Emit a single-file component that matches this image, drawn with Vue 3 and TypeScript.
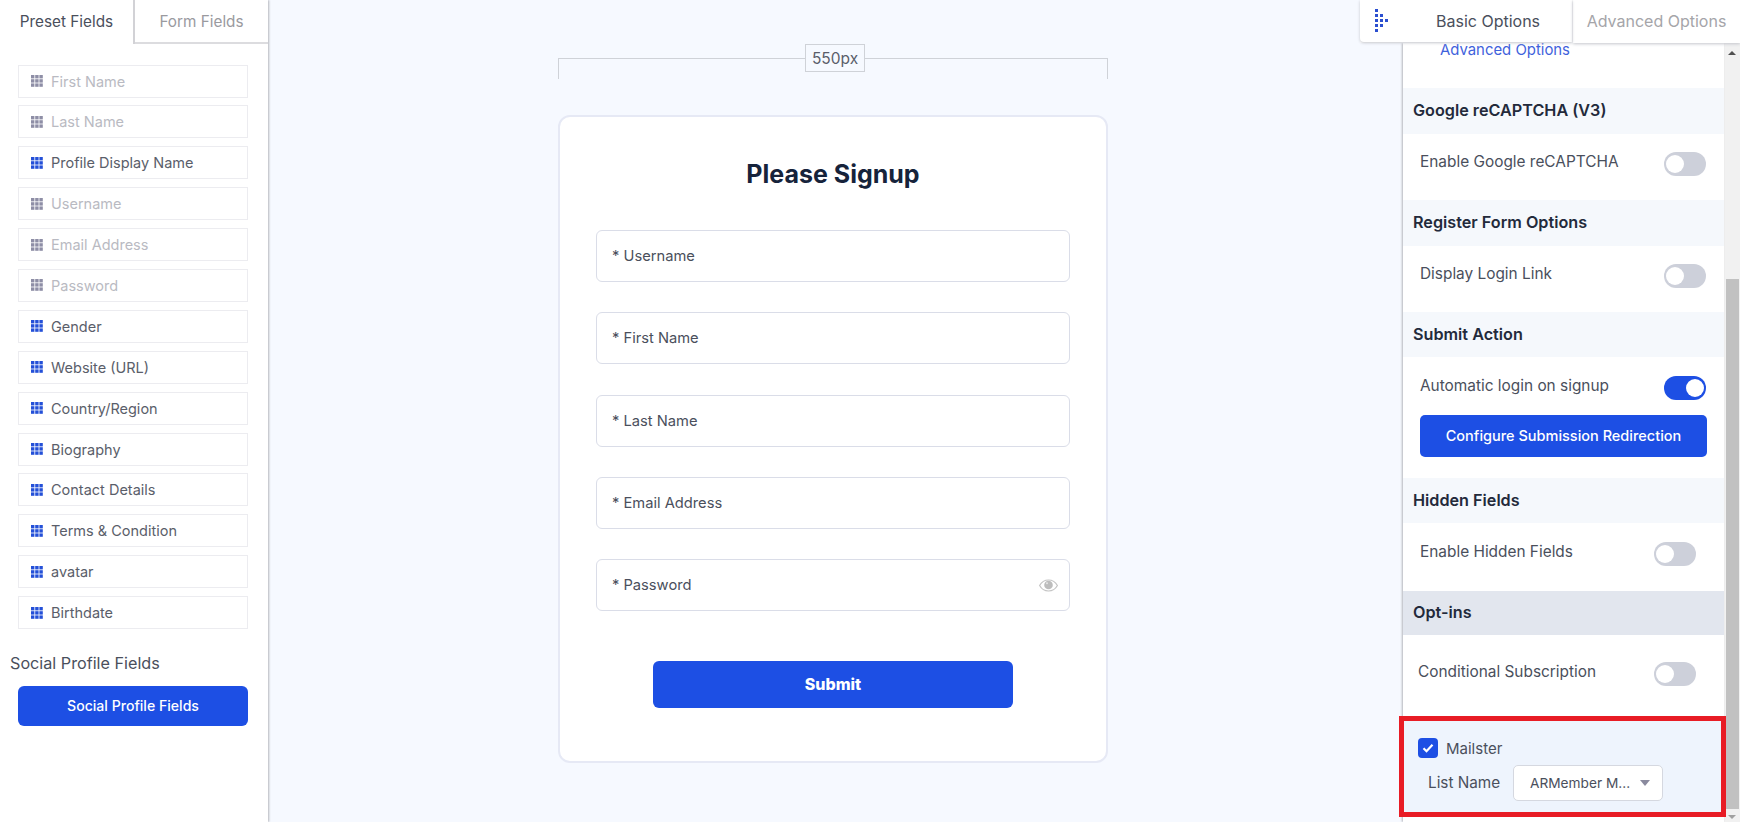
<script setup lang="ts">
const presetFields = [
  { label: "First Name", used: true },
  { label: "Last Name", used: true },
  { label: "Profile Display Name", used: false },
  { label: "Username", used: true },
  { label: "Email Address", used: true },
  { label: "Password", used: true },
  { label: "Gender", used: false },
  { label: "Website (URL)", used: false },
  { label: "Country/Region", used: false },
  { label: "Biography", used: false },
  { label: "Contact Details", used: false },
  { label: "Terms & Condition", used: false },
  { label: "avatar", used: false },
  { label: "Birthdate", used: false },
]

const formInputs = ["* Username", "* First Name", "* Last Name", "* Email Address", "* Password"]
const gripDots = [0, 1, 2]
</script>

<template>
  <div class="page">
    <aside class="left">
      <div class="left-tabs">
        <div class="ltab active">Preset Fields</div>
        <div class="ltab">Form Fields</div>
      </div>
      <div class="field-list">
        <div v-for="f in presetFields" :key="f.label" class="field-item" :class="{ used: f.used }">
          <svg class="grip" width="12" height="12" viewBox="0 0 12 12">
            <template v-for="y in gripDots" :key="y">
              <rect v-for="x in gripDots" :key="x" :x="x * 4.2" :y="y * 4.2" width="3.4" height="3.4" />
            </template>
          </svg>
          <span>{{ f.label }}</span>
        </div>
      </div>
      <div class="social-title">Social Profile Fields</div>
      <div class="social-btn">Social Profile Fields</div>
    </aside>

    <main class="center">
      <div class="ruler">
        <span class="ruler-label">550px</span>
      </div>
      <div class="card">
        <h1 class="card-title">Please Signup</h1>
        <div v-for="name in formInputs" :key="name" class="input">
          <span>{{ name }}</span>
          <svg v-if="name === '* Password'" class="eye" width="19" height="13" viewBox="0 0 19 13">
            <path d="M.6 6.5C2.6 2.9 5.8 1 9.5 1s6.900 1.900 8.900 5.500c-2 3.600-5.200 5.500-8.900 5.500S2.600 10.100.6 6.500z" fill="none" stroke="#c4c4c4" stroke-width="1.200" />
            <circle cx="9.500" cy="6" r="4.300" fill="#bdbdbd" />
            <circle cx="8" cy="4.200" r="1" fill="#e6e6e6" />
          </svg>
        </div>
        <div class="submit">Submit</div>
      </div>
    </main>

    <section class="right">
      <div class="right-tabs">
        <div class="handle">
          <svg width="14" height="24" viewBox="0 0 14 24" fill="#2b4fd0">
            <rect x="0" y="0" width="3" height="3" /><rect x="0" y="5" width="3" height="3" />
            <rect x="0" y="10" width="3" height="3" /><rect x="0" y="15" width="3" height="3" />
            <rect x="0" y="20" width="3" height="3" /><rect x="5" y="5" width="3" height="3" />
            <rect x="5" y="10" width="3" height="3" /><rect x="5" y="15" width="3" height="3" />
            <rect x="10" y="10" width="3" height="3" />
          </svg>
          <span>Basic Options</span>
        </div>
        <div class="rtab">Advanced Options</div>
      </div>
      <div class="right-body">
        <div class="options">
          <a class="adv-link">Advanced Options</a>

          <div class="opt-head">Google reCAPTCHA (V3)</div>
          <div class="opt-row row-google">
            <span>Enable Google reCAPTCHA</span>
            <i class="toggle"></i>
          </div>

          <div class="opt-head">Register Form Options</div>
          <div class="opt-row row-login">
            <span>Display Login Link</span>
            <i class="toggle"></i>
          </div>

          <div class="opt-head head-short">Submit Action</div>
          <div class="opt-row row-submit">
            <span>Automatic login on signup</span>
            <i class="toggle on"></i>
          </div>
          <div class="config-btn">Configure Submission Redirection</div>

          <div class="opt-head head-short">Hidden Fields</div>
          <div class="opt-row row-hidden">
            <span>Enable Hidden Fields</span>
            <i class="toggle"></i>
          </div>

          <div class="opt-head head-optins">Opt-ins</div>
          <div class="opt-row row-cond">
            <span>Conditional Subscription</span>
            <i class="toggle"></i>
          </div>

          <div class="mailster">
            <div class="check-line">
              <span class="checkbox">
                <svg width="12" height="10" viewBox="0 0 12 10"><path d="M1.500 5.200l3 3 6-6.500" fill="none" stroke="#fff" stroke-width="2.200" /></svg>
              </span>
              <span>Mailster</span>
            </div>
            <div class="list-line">
              <span class="list-label">List Name</span>
              <div class="select">
                <span>ARMember M...</span>
                <i class="caret"></i>
              </div>
            </div>
          </div>
        </div>
        <div class="scrollbar">
          <i class="arrow up"></i>
          <div class="thumb"></div>
          <i class="arrow down"></i>
        </div>
      </div>
    </section>
  </div>
</template>

<style>
html, body {
  margin: 0;
  overflow: hidden;
}
</style>

<style scoped>
.page {
  display: flex;
  width: 1740px;
  height: 822px;
  overflow: hidden;
  background: #f6f9ff;
  font-family: Inter, "Open Sans", sans-serif;
  color: #4a4f5c;
}

/* left column */
.left {
  width: 268px;
  flex: none;
  background: #fff;
  box-shadow: 1px 0 2px #b4b6bc;
}
.left-tabs {
  display: flex;
  height: 44px;
}
.ltab {
  flex: 1;
  text-align: center;
  line-height: 43px;
  font-size: 15.300px;
  color: #9a9a9f;
  background: #fff;
  border-bottom: 2px solid #dcdcdf;
  box-sizing: border-box;
  height: 44px;
}
.ltab.active {
  flex: none;
  width: 135px;
  color: #4a4f5c;
  border-bottom: none;
  border-right: 2px solid #d2d2d6;
}
.field-list {
  display: flex;
  flex-direction: column;
  gap: 7.900px;
  margin: 20.500px 20px 0 18px;
}
.field-item {
  display: flex;
  align-items: center;
  height: 33px;
  box-sizing: border-box;
  border: 1px solid #ececf0;
  padding-left: 12px;
  font-size: 14.500px;
  color: #5a5e6a;
}
.field-item .grip {
  margin-right: 8px;
  fill: #2450d8;
}
.field-item.used {
  color: #b9bac2;
}
.field-item.used .grip {
  fill: #8e8ea6;
}
.social-title {
  margin: 23.500px 0 0 10px;
  font-size: 16.200px;
  line-height: 20px;
  color: #4a4f5c;
}
.social-btn {
  margin: 13px 20px 0 18px;
  height: 40px;
  line-height: 40px;
  text-align: center;
  background: #1d4fe4;
  color: #fff;
  border-radius: 6px;
  font-size: 14.100px;
  font-weight: 500;
}

/* canvas */
.center {
  flex: 1;
  padding: 58px 0 0 290px;
}
.ruler {
  width: 550px;
  height: 21px;
  box-sizing: border-box;
  border: 1px solid #cfd2d8;
  border-bottom: none;
  display: flex;
  justify-content: center;
}
.ruler-label {
  height: 28px;
  margin: -15px 0 0 4px;
  padding: 0 6px;
  box-sizing: border-box;
  border: 1px solid #cfd2d8;
  background: #f6f9ff;
  font-size: 15.500px;
  line-height: 27px;
  color: #5a5e6a;
}
.card {
  width: 550px;
  height: 648px;
  margin-top: 36px;
  box-sizing: border-box;
  padding: 0 36px;
  background: #fff;
  border: 2px solid #e6e9f5;
  border-radius: 12px;
}
.card-title {
  margin: 0;
  padding-top: 42px;
  height: 113px;
  box-sizing: border-box;
  text-align: center;
  font-size: 25px;
  line-height: 30px;
  font-weight: 700;
  color: #16233b;
}
.input {
  display: flex;
  align-items: center;
  justify-content: space-between;
  height: 52px;
  margin-bottom: 30.300px;
  padding: 0 11px 0 15px;
  box-sizing: border-box;
  border: 1px solid #dadde8;
  border-radius: 6px;
  font-size: 14.700px;
  color: #4a4f5c;
}
.submit {
  width: 360px;
  height: 47px;
  margin: 50px auto 0;
  line-height: 47px;
  text-align: center;
  background: #1d4fe4;
  color: #fff;
  font-weight: 800;
  font-size: 16px;
  border-radius: 6px;
}

/* options column */
.right {
  width: 380px;
  flex: none;
  display: flex;
  flex-direction: column;
}
.right-tabs {
  display: flex;
  height: 43px;
  background: #fff;
  position: relative;
  z-index: 2;
}
.handle {
  width: 212px;
  height: 42px;
  flex: none;
  display: flex;
  align-items: center;
  padding-left: 15px;
  box-sizing: border-box;
  border-radius: 0 0 0 4px;
  box-shadow: 0 1px 3px #c4c6cc;
  background: #fff;
  font-size: 16px;
  color: #4a4f5c;
}
.handle span {
  margin-left: 47px;
}
.rtab {
  flex: 1;
  margin-left: 1px;
  text-align: center;
  line-height: 42px;
  font-size: 16px;
  color: #a5a5a9;
  box-shadow: 0 1px 3px #c4c6cc;
}
.right-body {
  flex: 1;
  display: flex;
  margin-left: 43px;
  min-height: 0;
}
.options {
  width: 321px;
  flex: none;
  background: #fff;
  box-shadow: -1px 0 2px #b4b6bc;
  font-size: 15.400px;
  color: #4a4f5c;
  position: relative;
}
.adv-link {
  display: block;
  height: 45px;
  padding-left: 37px;
  font-size: 14.900px;
  line-height: 14px;
  color: #3f62dc;
}
.opt-head {
  height: 46px;
  line-height: 45px;
  padding-left: 10px;
  background: #f5f8fc;
  font-size: 16.200px;
  font-weight: 600;
  color: #232a3b;
}
.head-short {
  height: 45px;
  line-height: 45px;
}
.head-optins {
  height: 44px;
  line-height: 43px;
  background: #e2e6ee;
}
.opt-row {
  display: flex;
  justify-content: space-between;
  padding: 0 18px 0 17px;
  box-sizing: border-box;
}
.opt-row span {
  line-height: 20px;
}
.row-google { height: 66px; padding-top: 18px; }
.row-login { height: 66px; padding-top: 18px; }
.row-submit { height: 58px; padding-top: 19px; }
.row-hidden { height: 68px; padding-top: 19px; padding-right: 28px; }
.row-cond { height: 81px; padding-top: 27px; padding-left: 15px; padding-right: 28px; }
.toggle {
  position: relative;
  display: block;
  flex: none;
  width: 42px;
  height: 24px;
  border-radius: 12px;
  background: #cdd0da;
}
.toggle::after {
  content: "";
  position: absolute;
  left: 2px;
  top: 3px;
  width: 18px;
  height: 18px;
  border-radius: 50%;
  background: #fff;
}
.toggle.on {
  background: #1d4fe4;
}
.toggle.on::after {
  left: 22px;
}
.config-btn {
  width: 287px;
  height: 42px;
  margin: 0 0 21px 17px;
  line-height: 42px;
  text-align: center;
  background: #1d4fe4;
  color: #fff;
  border-radius: 5px;
  font-size: 14.500px;
  font-weight: 500;
}
.mailster {
  position: absolute;
  left: -4px;
  right: -2px;
  top: 673px;
  height: 101px;
  box-sizing: border-box;
  border: 5px solid #e81c25;
  background: #eef4fd;
  padding: 17px 0 0 14px;
  font-size: 15px;
}
.check-line {
  display: flex;
  align-items: center;
  gap: 8px;
}
.checkbox {
  display: flex;
  align-items: center;
  justify-content: center;
  width: 20px;
  height: 20px;
  border-radius: 4px;
  background: #1d4fe4;
}
.list-line {
  display: flex;
  align-items: center;
  margin: 7px 0 0 10px;
}
.list-label {
  width: 85px;
  margin-top: -1px;
  font-size: 15.300px;
}
.select {
  display: flex;
  align-items: center;
  justify-content: space-between;
  width: 150px;
  height: 36px;
  padding: 0 12px 0 16px;
  box-sizing: border-box;
  background: #fff;
  border: 1px solid #d5d8e0;
  border-radius: 5px;
  font-size: 13.700px;
  white-space: nowrap;
}
.caret {
  width: 0;
  height: 0;
  border-left: 5.500px solid transparent;
  border-right: 5.500px solid transparent;
  border-top: 6px solid #8a8a9e;
}
.scrollbar {
  flex: 1;
  display: flex;
  flex-direction: column;
  align-items: center;
  background: #f1f1f1;
}
.thumb {
  width: 13px;
  flex: 1;
  margin: 224px 0 6px;
  background: #c1c1c1;
}
.arrow {
  display: block;
  width: 0;
  height: 0;
  border-left: 4px solid transparent;
  border-right: 4px solid transparent;
}
.arrow.up {
  margin-top: 8px;
  border-bottom: 4px solid #505050;
}
.arrow.down {
  margin-bottom: 3px;
  border-top: 4px solid #a0a0a0;
}
</style>
